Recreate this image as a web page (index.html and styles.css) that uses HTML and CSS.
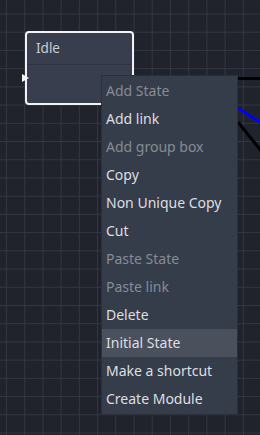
FILE: index.html
```html
<!DOCTYPE html>
<html>
<head>
<meta charset="utf-8">
<link rel="stylesheet" href="styles.css">
</head>
<body>
<div class="canvas">
  <svg class="links" width="260" height="435" viewBox="0 0 260 435">
    <line x1="236" y1="78.5" x2="262" y2="78.5" stroke="#000" stroke-width="3"/>
    <line x1="238" y1="108" x2="262" y2="123.5" stroke="#0000ff" stroke-width="3"/>
    <line x1="238" y1="122" x2="262" y2="152" stroke="#000" stroke-width="3"/>
  </svg>
  <div class="node">
    <div class="node-title">Idle</div>
    <div class="node-body"></div>
    <span class="node-port"></span>
  </div>
  <ul class="menu">
    <li class="item disabled">Add State</li>
    <li class="item">Add link</li>
    <li class="item disabled">Add group box</li>
    <li class="item">Copy</li>
    <li class="item">Non Unique Copy</li>
    <li class="item">Cut</li>
    <li class="item disabled">Paste State</li>
    <li class="item disabled">Paste link</li>
    <li class="item">Delete</li>
    <li class="item hover">Initial State</li>
    <li class="item">Make a shortcut</li>
    <li class="item">Create Module</li>
  </ul>
</div>
</body>
</html>
```
FILE: styles.css
```css
html, body {
  margin: 0;
  padding: 0;
  width: 260px;
  height: 435px;
  overflow: hidden;
  font-family: "Noto Sans", "DejaVu Sans", sans-serif;
}
.canvas {
  position: relative;
  width: 260px;
  height: 435px;
  background-color: #20232c;
  background-image:
    linear-gradient(to right, #323744 1px, transparent 1px),
    linear-gradient(to bottom, #323744 1px, transparent 1px);
  background-size: 18.22px 18.22px;
  background-position: 6px 13.5px;
}
.links {
  position: absolute;
  left: 0;
  top: 0;
}
.node {
  position: absolute;
  left: 25px;
  top: 31px;
  width: 105px;
  height: 70px;
  border: 2px solid #f2f2f2;
  border-radius: 4px;
  background: #383e4d;
  display: flex;
  flex-direction: column;
}
.node-title {
  height: 32px;
  box-sizing: border-box;
  padding: 6px 0 0 9px;
  font-size: 13.5px;
  color: #cbccd0;
  border-bottom: 1px solid #2f3441;
}
.node-body {
  flex: 1;
}
.node-port {
  position: absolute;
  left: -5px;
  top: 41px;
  width: 0;
  height: 0;
  border-top: 4.5px solid transparent;
  border-bottom: 4.5px solid transparent;
  border-left: 7px solid #f4f4f4;
}
.menu {
  position: absolute;
  left: 101px;
  top: 75px;
  width: 135px;
  margin: 0;
  padding: 1px 0;
  list-style: none;
  background: #363d4a;
  border: 1px solid #2b303b;
}
.item {
  height: 28px;
  line-height: 28px;
  padding-left: 4px;
  font-size: 14px;
  color: #dedfe2;
  white-space: nowrap;
}
.item.disabled {
  color: #868b95;
}
.item.hover {
  background: #4a505c;
}
```
